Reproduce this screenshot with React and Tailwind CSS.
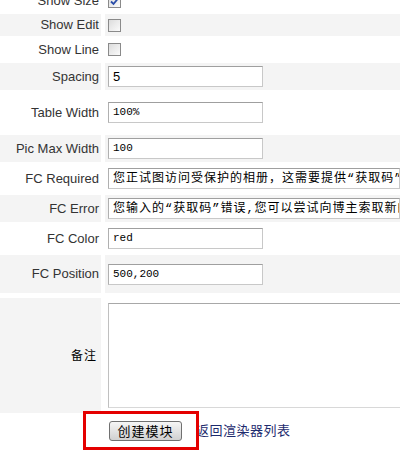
import React from "react";

const sans = { fontFamily: '"Liberation Sans", Arial, "Noto Sans CJK SC", sans-serif' };
const mono = { fontFamily: '"Liberation Mono", "Noto Sans CJK SC", monospace' };

function Checkbox({ checked }) {
  return (
    <div className="w-[13px] h-[13px] border border-[#8a8a8a] bg-gradient-to-br from-[#dcdcdc] to-[#fbfbfb] flex items-center justify-center">
      {checked ? (
        <svg width="9" height="9" viewBox="0 0 9 9">
          <path d="M1 4.5 L3.5 7 L8 1.5" stroke="#2a4da8" strokeWidth="1.8" fill="none" />
        </svg>
      ) : null}
    </div>
  );
}

function Input({ value, wide, kind }) {
  let cls = "text-[11px]";
  let st = mono;
  if (kind === "cjk") cls = "text-[12px] tracking-[1px]";
  if (kind === "sans") {
    cls = "text-[13px]";
    st = sans;
  }
  return (
    <div
      className={
        "h-[21px] border border-[#c8c8c8] border-t-[#9f9f9f] border-l-[#b0b0b0] bg-white flex items-center pl-[4px] overflow-hidden whitespace-nowrap text-black " +
        (wide ? "w-[320px] " : "w-[155px] ") +
        cls
      }
      style={st}
    >
      {value}
    </div>
  );
}

function Row({ label, h, gray, children, mt = "mt-[2px]" }) {
  return (
    <div className={"flex gap-[4px] " + mt} style={{ height: h }}>
      <div
        className={
          "w-[101px] shrink-0 flex items-center justify-end pr-[2px] text-[13px] text-[#333] " +
          (gray ? "bg-[#f4f4f4]" : "bg-white")
        }
        style={sans}
      >
        {label}
      </div>
      <div
        className={
          "flex-1 flex items-center pl-[3px] overflow-hidden " + (gray ? "bg-[#f4f4f4]" : "bg-white")
        }
      >
        {children}
      </div>
    </div>
  );
}

export default function App() {
  return (
    <div className="w-[400px] h-[456px] overflow-hidden bg-white relative">
      <div className="-mt-[10px]">
        <Row label="Show Size" h={22} gray={false} mt="mt-0">
          <Checkbox checked />
        </Row>
        <Row label="Show Edit" h={22} gray>
          <Checkbox />
        </Row>
        <Row label="Show Line" h={23} gray={false}>
          <Checkbox />
        </Row>
        <Row label="Spacing" h={27} gray>
          <Input value="5" kind="sans" />
        </Row>
        <Row label="Table Width" h={41} gray={false}>
          <Input value="100%" />
        </Row>
        <Row label="Pic Max Width" h={27} gray>
          <Input value="100" />
        </Row>
        <Row label="FC Required" h={29} gray={false}>
          <Input wide kind="cjk" value="您正试图访问受保护的相册，这需要提供“获取码”才能访问" />
        </Row>
        <Row label="FC Error" h={27} gray>
          <Input wide kind="cjk" value="您输入的“获取码”错误,您可以尝试向博主索取新的获取码" />
        </Row>
        <Row label="FC Color" h={29} gray={false}>
          <Input value="red" />
        </Row>
        <Row label="FC Position" h={38} gray>
          <Input value="500,200" />
        </Row>
        <div className="flex gap-[4px] mt-[5px] h-[115px]">
          <div
            className="w-[101px] shrink-0 bg-[#f4f4f4] flex items-center justify-end pr-[4px] text-[12px] tracking-[1px] text-black"
            style={sans}
          >
            备注
          </div>
          <div className="flex-1 bg-white pt-[5px] pl-[3px] overflow-hidden">
            <div className="w-[320px] h-[105px] border border-[#d8d8d8] border-t-[#a8a8a8] border-l-[#c0c0c0] bg-white" />
          </div>
        </div>
        <div className="relative h-[45px] flex items-start pt-[8px] pl-[109px] gap-[14px]">
          <button
            className="h-[20px] w-[73px] border border-[#707070] rounded-[3px] bg-gradient-to-b from-[#f6f6f6] to-[#d0d0d0] text-[13px] text-black tracking-[1px] flex items-center justify-center leading-none"
            style={sans}
          >
            创建模块
          </button>
          <span className="text-[13px] text-[#1d2b6e] leading-[20px] tracking-[0.5px]" style={sans}>
            返回渲染器列表
          </span>
          <div className="absolute left-[83px] top-[-2px] w-[116px] h-[39px] border-[3px] border-[#e40000]" />
        </div>
      </div>
    </div>
  );
}
